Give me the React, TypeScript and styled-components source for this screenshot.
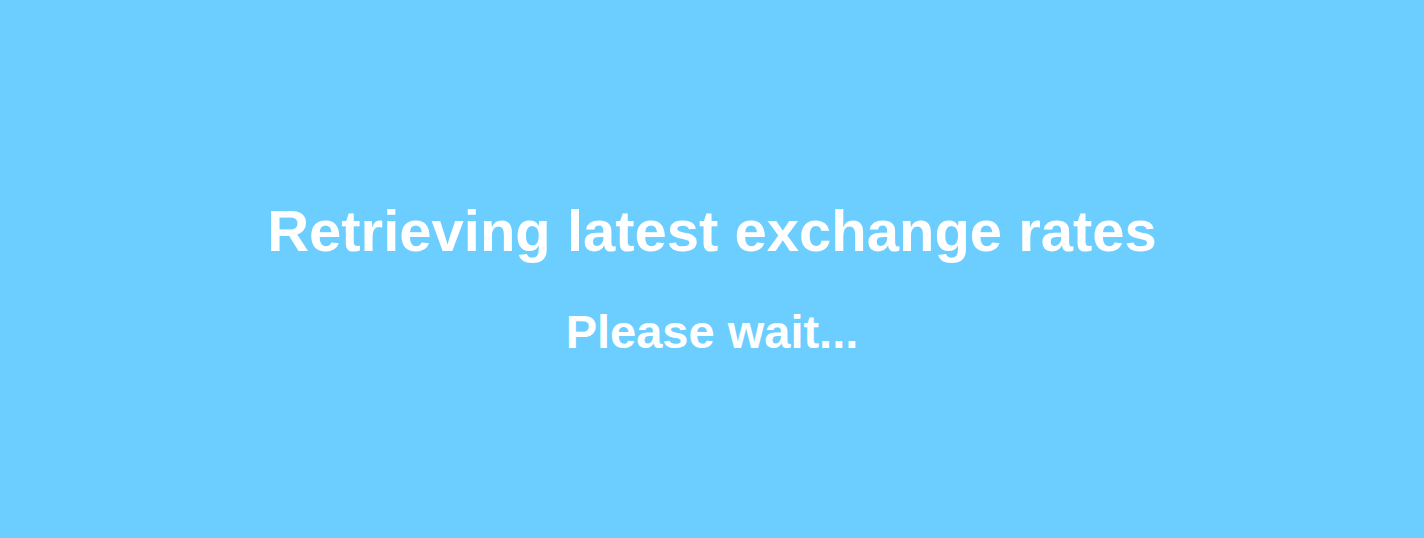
import styled, { createGlobalStyle } from "styled-components";

const GlobalStyle = createGlobalStyle`
  html, body {
    margin: 0;
    padding: 0;
    background: #6ccdff;
  }
`;

const Screen = styled.main`
  display: flex;
  flex-direction: column;
  align-items: center;
  justify-content: center;
  box-sizing: border-box;
  height: 100vh;
  padding-top: 18px;
  background: #6ccdff;
  color: #ffffff;
  font-family: "Liberation Sans", Arial, Helvetica, sans-serif;
  text-align: center;
`;

const Title = styled.h1`
  margin: 0 0 40px;
  font-size: 58px;
  font-weight: 700;
  line-height: normal;
`;

const Subtitle = styled.p`
  margin: 0;
  font-size: 47px;
  font-weight: 700;
  line-height: normal;
`;

const App = () => {
  return (
    <>
      <GlobalStyle />
      <Screen>
        <Title>Retrieving latest exchange rates</Title>
        <Subtitle>Please wait...</Subtitle>
      </Screen>
    </>
  );
};

export default App;
